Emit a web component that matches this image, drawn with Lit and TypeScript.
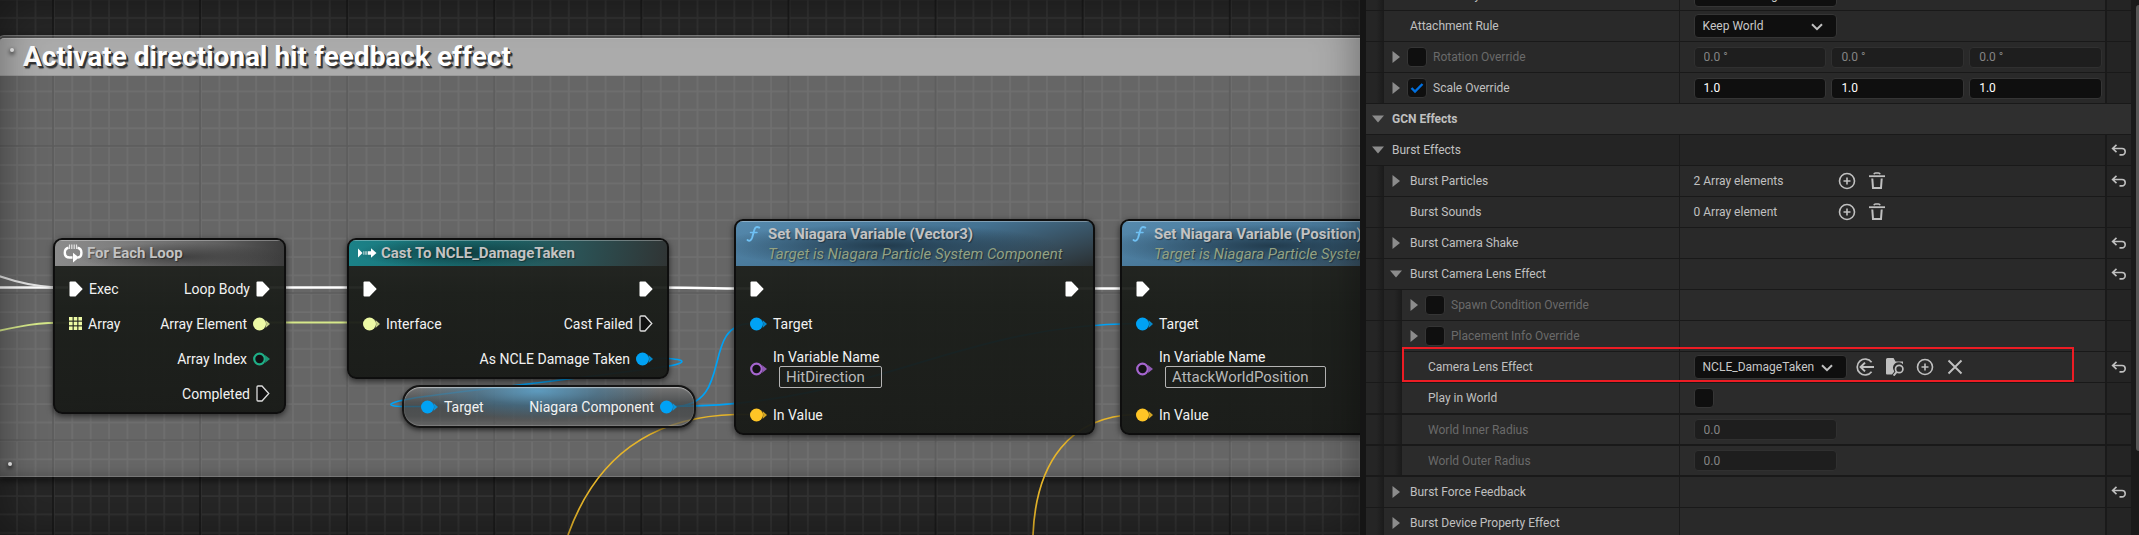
import { LitElement, html, svg, css, nothing } from "lit";
import { customElement, property } from "lit/decorators.js";
import { classMap } from "lit/directives/class-map.js";
import { styleMap } from "lit/directives/style-map.js";

type PinKind = "exec" | "exec-open" | "data" | "data-open" | "array" | "none";

interface Pin {
  kind: PinKind;
  label?: string;
  color?: string;
  value?: string;
}

interface GraphNodeData {
  x: number;
  y: number;
  width: number;
  theme: "grey" | "teal" | "blue";
  icon: "loop" | "cast" | "fn";
  title: string;
  subtitle?: string;
  inputs: Pin[];
  outputs: Pin[];
}

const LIME = "#edfaa5";
const SKY = "#00a2f5";
const GREEN = "#1fae86";
const GOLD = "#ffc526";
const VIOLET = "#a565cf";

const nodes: GraphNodeData[] = [
  {
    x: 53, y: 238, width: 233, theme: "grey", icon: "loop", title: "For Each Loop",
    inputs: [{ kind: "exec", label: "Exec" }, { kind: "array", label: "Array", color: LIME }],
    outputs: [
      { kind: "exec", label: "Loop Body" },
      { kind: "data", label: "Array Element", color: LIME },
      { kind: "data-open", label: "Array Index", color: GREEN },
      { kind: "exec-open", label: "Completed" },
    ],
  },
  {
    x: 347, y: 238, width: 322, theme: "teal", icon: "cast", title: "Cast To NCLE_DamageTaken",
    inputs: [{ kind: "exec" }, { kind: "data", label: "Interface", color: LIME }],
    outputs: [
      { kind: "exec" },
      { kind: "exec-open", label: "Cast Failed" },
      { kind: "data", label: "As NCLE Damage Taken", color: SKY },
    ],
  },
  {
    x: 734, y: 219, width: 361, theme: "blue", icon: "fn", title: "Set Niagara Variable (Vector3)",
    subtitle: "Target is Niagara Particle System Component",
    inputs: [
      { kind: "exec" },
      { kind: "data", label: "Target", color: SKY },
      { kind: "data-open", label: "In Variable Name", color: VIOLET, value: "HitDirection" },
      { kind: "data", label: "In Value", color: GOLD },
    ],
    outputs: [{ kind: "exec" }],
  },
  {
    x: 1120, y: 219, width: 361, theme: "blue", icon: "fn", title: "Set Niagara Variable (Position)",
    subtitle: "Target is Niagara Particle System Component",
    inputs: [
      { kind: "exec" },
      { kind: "data", label: "Target", color: SKY },
      { kind: "data-open", label: "In Variable Name", color: VIOLET, value: "AttackWorldPosition" },
      { kind: "data", label: "In Value", color: GOLD },
    ],
    outputs: [{ kind: "exec" }],
  },
];

const wires: [string, string, number][] = [
  ["#ffffff", "M0 287.5H68", 2.6],
  ["#e4e4e4", "M-4 275C18 283 34 286.500 56 287.500", 2],
  ["#ffffff", "M270 287.500H363", 2.6],
  ["#ffffff", "M653 287.500C690 287.500 710 288.500 750 288.500", 2.6],
  ["#ffffff", "M1079 288.500H1136", 2.6],
  ["#d6e88a", "M-2 331C20 326 36 322.500 70 322.500", 2],
  ["#d6e88a", "M268 322.500H363", 2],
  [SKY, "M652 358.500H668C690 360 686 364 655 368C590 377 500 387 440 394.500C386 401 380 406.500 405 406.500H421", 1.6],
  [SKY, "M674 406.500C735 406 700 325 750 323.500", 1.7],
  [SKY, "M674 406.500C870 406 955 325 1136 323.500", 1.7],
  ["#e6b52a", "M568 535C592 468 640 417 735 414.500H750", 1.7],
  ["#e6b52a", "M1033 535C1036 462 1070 416 1136 414.500", 1.7],
];

const pinIcon = (kind: PinKind, color = "#fff") => {
  switch (kind) {
    case "exec":
      return html`<svg width="14" height="16" viewBox="0 0 14 16" aria-hidden="true"><path d="M.5 1.500Q.5.5 1.500.5H6.500L13.300 7.400Q13.700 8 13.300 8.600L6.500 15.500H1.500Q.5 15.500.5 14.500Z" fill="#fff"/></svg>`;
    case "exec-open":
      return html`<svg width="14" height="17" viewBox="0 0 14 17" aria-hidden="true"><path d="M1 2Q1 1 2 1H6L12.800 8.500L6 16H2Q1 16 1 15Z" fill="#111" stroke="#dcdcdc" stroke-width="1.300"/></svg>`;
    case "data":
      return html`<svg width="17" height="14" viewBox="0 0 17 14" aria-hidden="true"><circle cx="6.500" cy="7" r="6.500" fill=${color}/><path d="M12.500 3L17 7L12.500 11Q14 7 12.500 3Z" fill=${color} opacity=".8"/></svg>`;
    case "data-open":
      return html`<svg width="17" height="14" viewBox="0 0 17 14" aria-hidden="true"><circle cx="6.500" cy="7" r="5.300" fill="#131114" stroke=${color} stroke-width="2.200"/><path d="M12 3L17 7L12 11Q13.500 7 12 3Z" fill=${color} opacity=".85"/></svg>`;
    case "array":
      return html`<svg width="13" height="13" viewBox="0 0 13 13" aria-hidden="true">${[0, 4.7, 9.4].map((y) =>
        [0, 4.7, 9.4].map((x) => svg`<rect x=${x} y=${y} width="3.600" height="3.600" fill=${color}/>`))}</svg>`;
    default:
      return nothing;
  }
};

const headerIcon = (icon: GraphNodeData["icon"]) => {
  switch (icon) {
    case "loop":
      return html`<svg width="20" height="20" viewBox="0 0 20 20" fill="none" aria-hidden="true"><path d="M9.500 14.500H6.500C3.300 14.500 1.800 12.800 1.800 9.800S3.300 5.200 5.500 4.800" stroke="#fff" stroke-width="2.400"/><path d="M14.500 4.800C17 5.200 18.400 6.800 18.400 9.800S17 14.300 15 14.500" stroke="#fff" stroke-width="2.400"/><path d="M10 9.800L16 14.600L10 19.500Z" fill="#fff"/><path d="M6.500 1.500V6M8.800 1.500V6M11.200 1.500V6M13.500 1.500V6" stroke="#e6e6e6" stroke-width="1.200"/></svg>`;
    case "cast":
      return html`<svg width="20" height="12" viewBox="0 0 20 12" fill="#fff" aria-hidden="true"><path d="M1 1.500L5.500 6L1 10.500Z"/><path d="M6.500 4.300h.8v3.400h-.8zM8.500 4.300h1v3.400h-1zM10.700 4.300H14v-3L19.500 6L14 10.700v-3h-3.300z"/></svg>`;
    case "fn":
      return html`<svg width="20" height="18" viewBox="0 0 20 18" fill="none" stroke="#6fc0f3" stroke-linecap="round" aria-hidden="true"><path d="M3.500 15C5.500 16.600 7.200 15.500 8.200 12.500L10.300 5C11.200 2 13 1.300 15.300 2.600" stroke-width="1.900"/><path d="M6.500 7.500H13" stroke-width="1.500"/></svg>`;
  }
};

@customElement("graph-node")
class GraphNode extends LitElement {
  @property({ attribute: false }) data!: GraphNodeData;

  static styles = css`
    :host { display: block; box-sizing: border-box; }
    .node {
      border: 2px solid #0e0e0e; border-radius: 9px; overflow: hidden;
      background: linear-gradient(#222420ee, #1a1d19f2 40%, #181a17f4);
      box-shadow: 0 2px 6px #0009;
    }
    .head {
      display: flex; gap: 4px; padding: 0 8px; min-height: 25px; align-items: flex-start;
      box-shadow: inset 0 1px 0 #ffffff50;
    }
    .head.grey { background: radial-gradient(ellipse 45% 55% at 55% 65%, #2e2e2eb0, transparent), linear-gradient(100deg, #8c8c8c, #7a7a7a 35%, #606060 70%, #3c3c3c); }
    .head.teal { background: radial-gradient(ellipse 34% 60% at 36% 50%, #0d3437d0, transparent), linear-gradient(100deg, #1b8288, #1a6c70 40%, #2b5255 72%, #303434); }
    .head.blue { background: radial-gradient(ellipse 48% 48% at 42% 55%, #1d3444e0, transparent), linear-gradient(165deg, #568aae, #447292 50%, #33444f 85%, #2a3032); }
    .icon { display: flex; align-items: center; justify-content: center; width: 20px; height: 26px; }
    .titles { color: #c3c3c3; font-size: 15px; line-height: 20px; white-space: nowrap; padding: 3px 0 2px; text-shadow: 1px 1px 1px #0006; }
    .title { font-weight: 700; }
    .subtitle { color: #93a283; font-style: italic; }
    .body { display: flex; justify-content: space-between; padding: 5px 14px 1px; }
    .col { display: flex; flex-direction: column; }
    .col.out { align-items: flex-end; }
    .pin { display: flex; align-items: center; gap: 6px; height: 35px; font-size: 14px; line-height: 16px; color: #f2f2f2; white-space: nowrap; }
    .pin.valued { height: 56px; }
    .pin svg { flex: none; }
    .out .pin { flex-direction: row-reverse; }
    .field { display: flex; flex-direction: column; align-items: flex-start; padding-bottom: 2px; }
    .field input {
      box-sizing: border-box; height: 22px; margin: 1px 0 0 6px; padding: 0 16px 0 6px; field-sizing: content;
      border: 1px solid #b4b4b4; border-radius: 2px; background: none; color: #b9b9b9; font: 15px Roboto, sans-serif; outline: none;
    }
  `;

  private pin(p: Pin) {
    return html`<div class=${classMap({ pin: true, valued: !!p.value })}>
      ${pinIcon(p.kind, p.color)}
      ${p.value
        ? html`<label class="field"><span>${p.label}</span><input type="text" .value=${p.value} /></label>`
        : p.label ? html`<span>${p.label}</span>` : nothing}
    </div>`;
  }

  render() {
    const d = this.data;
    return html`<article class="node">
      <header class="head ${d.theme}">
        <span class="icon">${headerIcon(d.icon)}</span>
        <div class="titles">
          <div class="title">${d.title}</div>
          ${d.subtitle ? html`<div class="subtitle">${d.subtitle}</div>` : nothing}
        </div>
      </header>
      <div class="body">
        <div class="col">${d.inputs.map((p) => this.pin(p))}</div>
        <div class="col out">${d.outputs.map((p) => this.pin(p))}</div>
      </div>
    </article>`;
  }
}

@customElement("event-graph")
class EventGraph extends LitElement {
  static styles = css`
    :host { display: block; position: relative; overflow: hidden; background: #262626; }
    .layer { position: absolute; inset: 0; width: 100%; height: 100%; }
    .comment {
      position: absolute; top: 35px; left: -2px; right: -20px; height: 442px; box-sizing: border-box;
      background: #ffffff4c; border: 1px solid #ffffff18; border-radius: 6px 0 0 0;
      box-shadow: 0 3px 8px #000a, inset 0 3px 2px #0004, inset 0 -8px 8px -4px #0002;
    }
    .comment h1 {
      margin: 2px 0 0; padding: 0 0 0 24px; height: 38px; box-sizing: border-box;
      border-top: 1px solid #bdbdbd; border-bottom: 1px solid #9a9a9a; border-radius: 5px 0 0 0;
      background: #ababab; color: #fff; font-size: 28px; line-height: 36px; font-weight: 700; white-space: nowrap;
      text-shadow: 1px 1px 0 #333, 2px 2px 0 #333, 2px 3px 1px #3338;
    }
    .dot { position: absolute; width: 4px; height: 4px; border-radius: 50%; background: #f0f0f0; box-shadow: 0 2px 4px #000; }
    .dot.top { left: 11px; top: 12px; }
    .dot.bottom { left: 9px; bottom: 10px; }
    graph-node, .getter { position: absolute; }
    .getter {
      left: 402px; top: 385px; width: 294px; height: 43px; box-sizing: border-box; padding: 0 17px;
      display: flex; align-items: center; justify-content: space-between;
      border: 2px solid #151515; border-radius: 18px; font-size: 14px; color: #f2f2f2;
      background:
        radial-gradient(ellipse 42% 75% at 46% 10%, #5aa6d2cc, #3f7fa680 50%, transparent),
        linear-gradient(#7a7a7ab0, #3f4446b8 45%, #444748b0 75%, #606060b0);
      box-shadow: inset 0 1px 1px #ffffff80, inset 0 -1px 1px #ffffff30, 0 2px 5px #0009;
    }
    .port { display: flex; align-items: center; gap: 6px; }
    .vignette { position: absolute; inset: 0; pointer-events: none; box-shadow: inset 0 0 44px #0006; }
  `;

  render() {
    return html`
      <svg class="layer" aria-hidden="true">
        <defs>
          <pattern id="minor" x="52.900" y="145.600" width="18.390" height="18.390" patternUnits="userSpaceOnUse">
            <path d="M0 1H18.390M1 0V18.390" stroke="#323232" stroke-width="1.700"/>
          </pattern>
          <pattern id="major" x="52" y="145" width="147.100" height="147.100" patternUnits="userSpaceOnUse">
            <path d="M0 1H147.100M1 0V147.100" stroke="#161616" stroke-width="1.600"/>
          </pattern>
        </defs>
        <rect width="100%" height="100%" fill="url(#minor)"/>
        <rect width="100%" height="100%" fill="url(#major)"/>
      </svg>
      <section class="comment">
        <h1>Activate directional hit feedback effect</h1>
        <span class="dot top"></span><span class="dot bottom"></span>
      </section>
      <svg class="layer" fill="none" aria-hidden="true">
        ${wires.map(([color, d, w]) => svg`<path d=${d} stroke=${color} stroke-width=${w}/>`)}
      </svg>
      ${nodes.map((n) => html`<graph-node .data=${n}
        style=${styleMap({ left: `${n.x}px`, top: `${n.y}px`, width: `${n.width}px` })}></graph-node>`)}
      <div class="getter">
        <span class="port">${pinIcon("data", SKY)}<span>Target</span></span>
        <span class="port"><span>Niagara Component</span>${pinIcon("data", SKY)}</span>
      </div>
      <div class="vignette"></div>
    `;
  }
}

interface Row {
  label: string;
  level: 0 | 1 | 2;
  category?: boolean;
  arrow?: "open" | "closed";
  check?: boolean;
  dim?: boolean;
  reset?: boolean;
  thick?: boolean;
  trim?: boolean;
  marked?: boolean;
  value?:
    | { type: "combo"; text: string; asset?: boolean }
    | { type: "vector"; text: string }
    | { type: "number"; text: string }
    | { type: "array"; text: string }
    | { type: "bool" };
}

const rows: Row[] = [
  { label: "Attach Policy", level: 1, value: { type: "combo", text: "Attach to Target" } },
  { label: "Attachment Rule", level: 1, value: { type: "combo", text: "Keep World" } },
  { label: "Rotation Override", level: 1, arrow: "closed", check: false, dim: true, value: { type: "vector", text: "0.0 °" } },
  { label: "Scale Override", level: 1, arrow: "closed", check: true, value: { type: "vector", text: "1.0" } },
  { label: "GCN Effects", level: 0, category: true, arrow: "open" },
  { label: "Burst Effects", level: 0, arrow: "open", reset: true },
  { label: "Burst Particles", level: 1, arrow: "closed", reset: true, value: { type: "array", text: "2 Array elements" } },
  { label: "Burst Sounds", level: 1, value: { type: "array", text: "0 Array element" } },
  { label: "Burst Camera Shake", level: 1, arrow: "closed", reset: true },
  { label: "Burst Camera Lens Effect", level: 1, arrow: "open", reset: true },
  { label: "Spawn Condition Override", level: 2, arrow: "closed", check: false, dim: true },
  { label: "Placement Info Override", level: 2, arrow: "closed", check: false, dim: true },
  { label: "Camera Lens Effect", level: 2, reset: true, marked: true, value: { type: "combo", text: "NCLE_DamageTaken", asset: true } },
  { label: "Play in World", level: 2, thick: true, value: { type: "bool" } },
  { label: "World Inner Radius", level: 2, dim: true, thick: true, trim: true, value: { type: "number", text: "0.0" } },
  { label: "World Outer Radius", level: 2, dim: true, thick: true, trim: true, value: { type: "number", text: "0.0" } },
  { label: "Burst Force Feedback", level: 1, arrow: "closed", reset: true },
  { label: "Burst Device Property Effect", level: 1, arrow: "closed" },
];

const glyphs = {
  add: html`<svg viewBox="0 0 18 18" aria-hidden="true"><circle cx="9" cy="9" r="7.500"/><path d="M9 5.500V12.500M5.500 9H12.500"/></svg>`,
  trash: html`<svg viewBox="0 0 18 18" aria-hidden="true"><path d="M1 4.200H17" stroke-width="1.800"/><path d="M6 2.200Q6.300 1 7.500 1H10.500Q11.700 1 12 2.200" stroke-width="1.700"/><path d="M4.300 6.500L5 16H13L13.700 6.500" stroke-width="2"/></svg>`,
  use: html`<svg viewBox="0 0 18 18" aria-hidden="true"><path d="M15.600 4.200A8 8 0 1 0 15.600 13.800" stroke-width="1.700"/><path d="M18 9H5M9 4.600L4.600 9L9 13.400" stroke-width="2"/></svg>`,
  browse: html`<svg viewBox="0 0 18 18" aria-hidden="true"><path d="M0 1.500Q0 0 1.500 0H7.500L9.500 3.500H17V6.200A5.500 5.500 0 0 0 8.300 13.500L6 16.500H1Q0 16.500 0 15.500Z" fill="#c0c0c0" stroke="none"/><circle cx="13.200" cy="11" r="3.700" stroke-width="1.700"/><path d="M10.600 13.900L7.600 17.600" stroke-width="2"/></svg>`,
  clear: html`<svg viewBox="0 0 18 18" aria-hidden="true"><path d="M2.500 2.500L15.500 15.500M15.500 2.500L2.500 15.500" stroke-width="1.900"/></svg>`,
};

@customElement("details-panel")
class DetailsPanel extends LitElement {
  static styles = css`
    :host { display: flex; overflow: hidden; background: #1a1a1a; color: #c0c0c0; font-size: 12px; }
    .list { flex: 1; min-width: 0; margin-top: -20px; }
    .row {
      position: relative; display: grid; grid-template-columns: minmax(0, 313fr) minmax(0, 427fr) 26px;
      height: 30px; border-bottom: 1px solid #191919; background: #292929;
    }
    .row.l0 { background: #242424; }
    .row.l2 { background: #2b2b2b; }
    .row.category { display: block; background: #2f2f2f; font-weight: 700; }
    .row.thick { border-bottom-width: 2px; }
    .row.trim { height: 29px; }
    .name { display: flex; align-items: center; height: 100%; white-space: nowrap; }
    .gutter {
      flex: none; width: 18px; height: 100%; box-sizing: border-box;
      background: linear-gradient(90deg, #252525 60%, #1c1c1c); border-right: 1px solid #1b1b1b;
    }
    .toggle {
      all: unset; display: flex; align-items: center; justify-content: center; width: 23px; height: 24px; flex: none;
    }
    .toggle svg { fill: #8c8c8c; stroke: none; }
    .toggle .open { width: 12px; height: 8px; }
    .toggle .closed { width: 8px; height: 12px; }
    .text { padding-left: 3px; }
    .check + .text { padding-left: 6px; }
    .dim { color: #6a6a6a; }
    .value { display: flex; align-items: center; border-left: 1px solid #1a1a1a; padding: 0 3px 0 14px; min-width: 0; }
    .reset { display: flex; align-items: center; justify-content: center; border-left: 2px solid #1a1a1a; background: #242424; }
    button { all: unset; display: flex; }
    button svg { width: 18px; height: 18px; fill: none; stroke: #c0c0c0; stroke-width: 1.6; }
    .reset button svg { width: 16px; height: 12px; }
    .tools { display: flex; gap: 12px; }
    .count { width: 144px; }
    .combo { position: relative; display: flex; width: 143px; }
    .combo.asset { width: 153px; margin-right: 9px; }
    select, input[type="text"] {
      box-sizing: border-box; width: 100%; min-width: 0; border: 1px solid #353535; border-radius: 4px;
      background: #0f0f0f; color: #c8c8c8; font: 12px Roboto, sans-serif; outline: none; margin: 0;
    }
    select { appearance: none; height: 24px; padding: 0 22px 0 8px; }
    .combo svg { position: absolute; right: 14px; top: 9px; fill: none; stroke: #c0c0c0; stroke-width: 2; pointer-events: none; }
    input[type="text"] { height: 21px; padding: 0 9px; color: #fff; }
    input[type="text"]:disabled { background: #1e1e1e; border-color: #303030; color: #848484; }
    .vector { display: flex; gap: 5px; width: 100%; }
    .number { width: 143px; }
    .check { position: relative; display: flex; flex: none; }
    .check input {
      appearance: none; margin: 0; width: 20px; height: 20px; box-sizing: border-box;
      border: 1px solid #353535; border-radius: 4px; background: #0f0f0f;
    }
    .check svg { position: absolute; left: 3px; top: 4px; fill: none; stroke: #0070e0; stroke-width: 2.4; pointer-events: none; }
    .mark { position: absolute; left: 36px; right: 57px; top: -5px; height: 35px; box-sizing: border-box; border: 2px solid #ed1c24; z-index: 1; pointer-events: none; }
    .scroll { width: 8px; flex: none; padding: 5px 0 84px 5px; box-sizing: border-box; }
    .thumb { height: 100%; background: #575757; border-radius: 4px 0 0 4px; }
  `;

  private checkbox(id: string, checked: boolean, label: string | typeof nothing) {
    return html`<span class="check"><input type="checkbox" id=${id} .checked=${checked} aria-label=${label} />
      ${checked ? html`<svg width="14" height="12" viewBox="0 0 14 12" aria-hidden="true"><path d="M1.500 6L5 9.500L12.500 2"/></svg>` : nothing}</span>`;
  }

  private value(r: Row) {
    const v = r.value;
    if (!v) return nothing;
    switch (v.type) {
      case "combo":
        return html`<span class=${classMap({ combo: true, asset: !!v.asset })}>
            <select aria-label=${r.label}><option selected>${v.text}</option></select>
            <svg width="12" height="8" viewBox="0 0 12 8" aria-hidden="true"><path d="M1 1.200L6 6.200L11 1.200"/></svg></span>
          ${v.asset ? html`<span class="tools">
            <button aria-label="Use selected asset">${glyphs.use}</button>
            <button aria-label="Browse to asset">${glyphs.browse}</button>
            <button aria-label="Create new">${glyphs.add}</button>
            <button aria-label="Clear">${glyphs.clear}</button></span>` : nothing}`;
      case "vector":
        return html`<span class="vector">${["X", "Y", "Z"].map((a) =>
          html`<input type="text" .value=${v.text} ?disabled=${!!r.dim} aria-label="${r.label} ${a}" />`)}</span>`;
      case "number":
        return html`<span class="number"><input type="text" .value=${v.text} disabled aria-label=${r.label} /></span>`;
      case "array":
        return html`<span class="count">${v.text}</span><span class="tools">
          <button aria-label="Add element">${glyphs.add}</button>
          <button aria-label="Remove all elements">${glyphs.trash}</button></span>`;
      case "bool":
        return this.checkbox("play", false, r.label);
    }
  }

  private row(r: Row, i: number) {
    const hasCheck = r.check !== undefined;
    const id = `check-${i}`;
    const name = html`<div class="name">
      ${Array.from({ length: r.level }, () => html`<span class="gutter"></span>`)}
      ${r.arrow
        ? html`<button class="toggle" aria-label="Toggle ${r.label}" aria-expanded=${r.arrow === "open"}>
            ${r.arrow === "open"
              ? html`<svg class="open" viewBox="0 0 12 8" aria-hidden="true"><path d="M0 .5H12L6 7.500Z"/></svg>`
              : html`<svg class="closed" viewBox="0 0 8 12" aria-hidden="true"><path d="M.5 0V12L8 6Z"/></svg>`}
          </button>`
        : html`<span class="toggle"></span>`}
      ${hasCheck ? this.checkbox(id, !!r.check, nothing) : nothing}
      ${hasCheck
        ? html`<label for=${id} class=${classMap({ text: true, dim: !!r.dim })}>${r.label}</label>`
        : html`<span class=${classMap({ text: true, dim: !!r.dim })}>${r.label}</span>`}
    </div>`;
    const cls = { row: true, [`l${r.level}`]: true, category: !!r.category, thick: !!r.thick, trim: !!r.trim };
    if (r.category) return html`<div class=${classMap(cls)}>${name}</div>`;
    return html`<div class=${classMap(cls)}>
      ${name}
      <div class="value">${this.value(r)}</div>
      <div class="reset">${r.reset
        ? html`<button aria-label="Reset ${r.label}"><svg viewBox="0 0 16 12" aria-hidden="true"><path d="M1.500 4.500H11A3.200 3.200 0 0 1 11 10.900H8.500M5.500.8L1.600 4.500L5.500 8.200"/></svg></button>`
        : nothing}</div>
      ${r.marked ? html`<div class="mark"></div>` : nothing}
    </div>`;
  }

  render() {
    return html`<div class="list">${rows.map((r, i) => this.row(r, i))}</div>
      <div class="scroll"><div class="thumb"></div></div>`;
  }
}

@customElement("app-root")
class AppRoot extends LitElement {
  static styles = css`
    :host {
      display: grid; grid-template-columns: minmax(0, 1360fr) minmax(0, 773fr); column-gap: 6px;
      height: 100vh; overflow: hidden; background: #151515; font-family: Roboto, sans-serif;
    }
  `;
  render() {
    return html`<event-graph></event-graph><details-panel></details-panel>`;
  }
}
